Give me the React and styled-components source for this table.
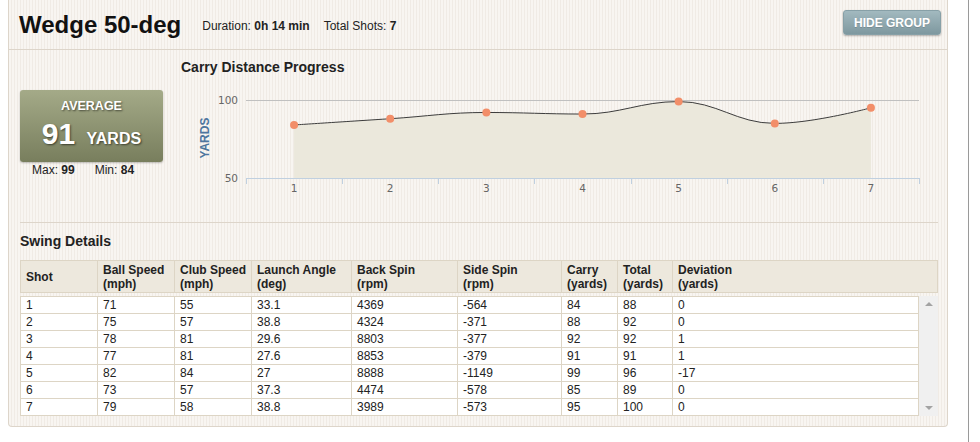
import React from "react";
import styled, { createGlobalStyle } from "styled-components";

const GlobalStyle = createGlobalStyle`
  * { box-sizing: border-box; }
  body {
    margin: 0;
    background: #fff;
    font-family: "Liberation Sans", Arial, sans-serif;
    color: #222;
  }
`;

const shots = [
  { shot: 1, ball: 71, club: 55, launch: "33.1", back: 4369, side: -564, carry: 84, total: 88, dev: 0 },
  { shot: 2, ball: 75, club: 57, launch: "38.8", back: 4324, side: -371, carry: 88, total: 92, dev: 0 },
  { shot: 3, ball: 78, club: 81, launch: "29.6", back: 8803, side: -377, carry: 92, total: 92, dev: 1 },
  { shot: 4, ball: 77, club: 81, launch: "27.6", back: 8853, side: -379, carry: 91, total: 91, dev: 1 },
  { shot: 5, ball: 82, club: 84, launch: "27", back: 8888, side: -1149, carry: 99, total: 96, dev: -17 },
  { shot: 6, ball: 73, club: 57, launch: "37.3", back: 4474, side: -578, carry: 85, total: 89, dev: 0 },
  { shot: 7, ball: 79, club: 58, launch: "38.8", back: 3989, side: -573, carry: 95, total: 100, dev: 0 },
];

const colWidths = [77, 77, 77, 100, 106, 104, 56, 55];

const headers = [
  ["Shot"],
  ["Ball Speed", "(mph)"],
  ["Club Speed", "(mph)"],
  ["Launch Angle", "(deg)"],
  ["Back Spin", "(rpm)"],
  ["Side Spin", "(rpm)"],
  ["Carry", "(yards)"],
  ["Total", "(yards)"],
  ["Deviation", "(yards)"],
];

// chart geometry (local svg coords)
const PLOT_LEFT = 65;
const PLOT_RIGHT = 738;
const Y_TOP = 20; // value 100
const Y_BOTTOM = 98; // value 50
const CAT_W = (PLOT_RIGHT - PLOT_LEFT) / 7;

const toY = (v) => Y_BOTTOM - ((v - 50) / 50) * (Y_BOTTOM - Y_TOP);

function splinePath(pts) {
  const s = 1.5;
  const den = s + 1;
  const conts = pts.map((p, i) => {
    const last = pts[i - 1];
    const next = pts[i + 1];
    if (!last || !next) return null;
    const lcx = (s * p.x + last.x) / den;
    let lcy = (s * p.y + last.y) / den;
    const rcx = (s * p.x + next.x) / den;
    let rcy = (s * p.y + next.y) / den;
    const corr = ((rcy - lcy) * (rcx - p.x)) / (rcx - lcx) + p.y - rcy;
    lcy += corr;
    rcy += corr;
    if (lcy > last.y && lcy > p.y) {
      lcy = Math.max(last.y, p.y);
      rcy = 2 * p.y - lcy;
    } else if (lcy < last.y && lcy < p.y) {
      lcy = Math.min(last.y, p.y);
      rcy = 2 * p.y - lcy;
    }
    if (rcy > next.y && rcy > p.y) {
      rcy = Math.max(next.y, p.y);
      lcy = 2 * p.y - rcy;
    } else if (rcy < next.y && rcy < p.y) {
      rcy = Math.min(next.y, p.y);
      lcy = 2 * p.y - rcy;
    }
    return { lcx, lcy, rcx, rcy };
  });
  let path = `M ${pts[0].x} ${pts[0].y}`;
  for (let i = 1; i < pts.length; i++) {
    const a = conts[i - 1];
    const b = conts[i];
    const c1x = a ? a.rcx : pts[i - 1].x;
    const c1y = a ? a.rcy : pts[i - 1].y;
    const c2x = b ? b.lcx : pts[i].x;
    const c2y = b ? b.lcy : pts[i].y;
    path += ` C ${c1x} ${c1y} ${c2x} ${c2y} ${pts[i].x} ${pts[i].y}`;
  }
  return path;
}

function CarryChart() {
  const pts = shots.map((s, i) => ({ x: PLOT_LEFT + (i + 0.5) * CAT_W, y: toY(s.carry) }));
  const line = splinePath(pts);
  const area = `${line} L ${pts[pts.length - 1].x} ${Y_BOTTOM} L ${pts[0].x} ${Y_BOTTOM} Z`;
  const ticks = Array.from({ length: 8 }, (_, i) => PLOT_LEFT + i * CAT_W);

  return (
    <ChartSvg width="750" height="120" viewBox="0 0 750 120">
      <line x1={PLOT_LEFT} x2={PLOT_RIGHT} y1={Y_TOP + 0.5} y2={Y_TOP + 0.5} stroke="#c0c0c0" />
      <path d={area} fill="#ebe8dc" />
      <path d={line} fill="none" stroke="#3c3c3c" strokeWidth="1" />
      <line x1={PLOT_LEFT} x2={PLOT_RIGHT + 1} y1={Y_BOTTOM + 0.5} y2={Y_BOTTOM + 0.5} stroke="#c0d0e0" />
      {ticks.map((x) => (
        <line key={x} x1={Math.round(x) + 0.5} x2={Math.round(x) + 0.5} y1={Y_BOTTOM} y2={Y_BOTTOM + 6} stroke="#c0d0e0" />
      ))}
      {pts.map((p, i) => (
        <circle key={i} cx={p.x} cy={p.y} r="4" fill="#f28e69" />
      ))}
      <AxisLabel x="57" y={Y_TOP + 4} textAnchor="end">100</AxisLabel>
      <AxisLabel x="57" y={Y_BOTTOM + 4} textAnchor="end">50</AxisLabel>
      {pts.map((p, i) => (
        <AxisLabel key={i} x={p.x} y="112" textAnchor="middle">{i + 1}</AxisLabel>
      ))}
      <AxisTitle transform="translate(28,58) rotate(-90)" textAnchor="middle">YARDS</AxisTitle>
    </ChartSvg>
  );
}

export default function App() {
  return (
    <Page>
      <GlobalStyle />
      <Panel>
        <Header>
          <Title>Wedge 50-deg</Title>
          <Meta>
            <span>Duration: <b>0h 14 min</b></span>
            <span>Total Shots: <b>7</b></span>
          </Meta>
          <HideButton>HIDE GROUP</HideButton>
        </Header>
        <Content>
          <Stats>
            <AverageColumn>
              <AverageBox>
                <AverageLabel>AVERAGE</AverageLabel>
                <AverageValue>
                  91 <small>YARDS</small>
                </AverageValue>
              </AverageBox>
              <MinMax>
                <span>Max: <b>99</b></span>
                <span>Min: <b>84</b></span>
              </MinMax>
            </AverageColumn>
            <ChartColumn>
              <SectionTitle>Carry Distance Progress</SectionTitle>
              <CarryChart />
            </ChartColumn>
          </Stats>
          <Details>
            <SectionTitle>Swing Details</SectionTitle>
            <HeadTable>
              <colgroup>
                {colWidths.map((w, i) => <col key={i} style={{ width: w }} />)}
                <col style={{ width: 265 }} />
              </colgroup>
              <thead>
                <tr>
                  {headers.map((h, i) => (
                    <th key={i}>
                      {h[0]}
                      {h[1] && <br />}
                      {h[1]}
                    </th>
                  ))}
                </tr>
              </thead>
            </HeadTable>
            <BodyWrap>
              <BodyTable>
                <colgroup>
                  {colWidths.map((w, i) => <col key={i} style={{ width: w }} />)}
                  <col style={{ width: 246 }} />
                </colgroup>
                <tbody>
                  {shots.map((s) => (
                    <tr key={s.shot}>
                      <td>{s.shot}</td>
                      <td>{s.ball}</td>
                      <td>{s.club}</td>
                      <td>{s.launch}</td>
                      <td>{s.back}</td>
                      <td>{s.side}</td>
                      <td>{s.carry}</td>
                      <td>{s.total}</td>
                      <td>{s.dev}</td>
                    </tr>
                  ))}
                </tbody>
              </BodyTable>
              <ScrollTrack>
                <Arrow $dir="up" />
                <Arrow $dir="down" />
              </ScrollTrack>
            </BodyWrap>
          </Details>
        </Content>
      </Panel>
    </Page>
  );
}

const Page = styled.div`
  width: 969px;
  min-height: 442px;
  border-right: 1px solid #9a9a9a;
  padding-left: 8px;
`;

const Panel = styled.div`
  width: 940px;
  border: 1px solid #ddd5ca;
  border-top: none;
  border-radius: 0 0 4px 4px;
  background: repeating-linear-gradient(
    90deg,
    #f8f5f1 0,
    #f8f5f1 2px,
    #f0ebe5 2px,
    #f0ebe5 3px
  );
`;

const Header = styled.div`
  display: flex;
  align-items: center;
  height: 50px;
  padding: 0 6px 0 10px;
  border-bottom: 1px solid #ddd5ca;
`;

const Title = styled.h1`
  margin: 0;
  font-size: 24px;
  line-height: 28px;
  font-weight: bold;
  color: #111;
`;

const Meta = styled.div`
  display: flex;
  gap: 14px;
  margin: 3px 0 0 21px;
  font-size: 12px;
  line-height: 14px;
  color: #222;
`;

const HideButton = styled.button`
  align-self: flex-start;
  margin: 10px 0 0 auto;
  height: 25px;
  padding: 0 10px;
  border: 1px solid #87a0a7;
  border-radius: 3px;
  background: linear-gradient(#a2b9bf, #7e989f);
  box-shadow: 0 1px 2px rgba(0, 0, 0, 0.3);
  color: #fff;
  font-family: "Liberation Sans", Arial, sans-serif;
  font-size: 12px;
  font-weight: bold;
  text-shadow: 0 1px 0 rgba(0, 0, 0, 0.15);
  cursor: pointer;
`;

const Content = styled.div`
  padding: 0 9px 10px 11px;
`;

const Stats = styled.div`
  display: flex;
  height: 173px;
  padding-top: 9px;
  border-bottom: 1px solid #ddd5ca;
`;

const AverageColumn = styled.div`
  width: 143px;
  padding-top: 31px;
`;

const AverageBox = styled.div`
  height: 72px;
  border-radius: 3px;
  background: linear-gradient(#a4aa88, #787e5d);
  box-shadow: 0 1px 2px rgba(0, 0, 0, 0.25);
  color: #fff;
  text-align: center;
  text-shadow: 1px 1px 2px rgba(0, 0, 0, 0.55);
  padding-top: 9px;
`;

const AverageLabel = styled.div`
  font-size: 12.5px;
  line-height: 14px;
  font-weight: bold;
`;

const AverageValue = styled.div`
  margin-top: 5px;
  font-size: 30px;
  line-height: 32px;
  font-weight: bold;

  small {
    font-size: 16px;
    margin-left: 3px;
  }
`;

const MinMax = styled.div`
  display: flex;
  gap: 20px;
  margin-top: 1px;
  padding-left: 12px;
  font-size: 12px;
  line-height: 14px;
`;

const ChartColumn = styled.div`
  margin-left: 18px;
`;

const SectionTitle = styled.div`
  font-size: 14px;
  line-height: 16px;
  font-weight: bold;
  color: #222;
`;

const ChartSvg = styled.svg`
  display: block;
  margin-top: 5px;
`;

const AxisLabel = styled.text`
  font-family: "DejaVu Sans", Verdana, sans-serif;
  font-size: 10.5px;
  fill: #666;
`;

const AxisTitle = styled.text`
  font-family: "Liberation Sans", Arial, sans-serif;
  font-size: 12px;
  font-weight: bold;
  fill: #4d759e;
`;

const Details = styled.div`
  padding-top: 10px;

  ${SectionTitle} {
    margin-bottom: 11px;
  }
`;

const HeadTable = styled.table`
  width: 917px;
  table-layout: fixed;
  border-collapse: collapse;
  background: #ede8dd;
  font-size: 12px;

  th {
    height: 32px;
    padding: 0 5px;
    border: 1px solid #ddd5c5;
    text-align: left;
    vertical-align: middle;
    line-height: 14px;
    font-weight: bold;
    color: #222;
  }
`;

const BodyWrap = styled.div`
  display: flex;
  margin-top: 3px;
`;

const BodyTable = styled.table`
  width: 898px;
  table-layout: fixed;
  border-collapse: collapse;
  background: #fff;
  font-size: 12px;

  td {
    height: 17px;
    padding: 0 5px;
    border: 1px solid #ddd5c5;
    line-height: 16px;
    color: #222;
  }
`;

const ScrollTrack = styled.div`
  width: 19px;
  background: #f0f0f0;
  display: flex;
  flex-direction: column;
  justify-content: space-between;
  align-items: center;
  padding: 6px 0 6px;
`;

const Arrow = styled.div`
  width: 0;
  height: 0;
  border-left: 4px solid transparent;
  border-right: 4px solid transparent;
  ${(p) => (p.$dir === "up" ? "border-bottom: 4px solid #a3a3a3;" : "border-top: 4px solid #a3a3a3;")}
`;
